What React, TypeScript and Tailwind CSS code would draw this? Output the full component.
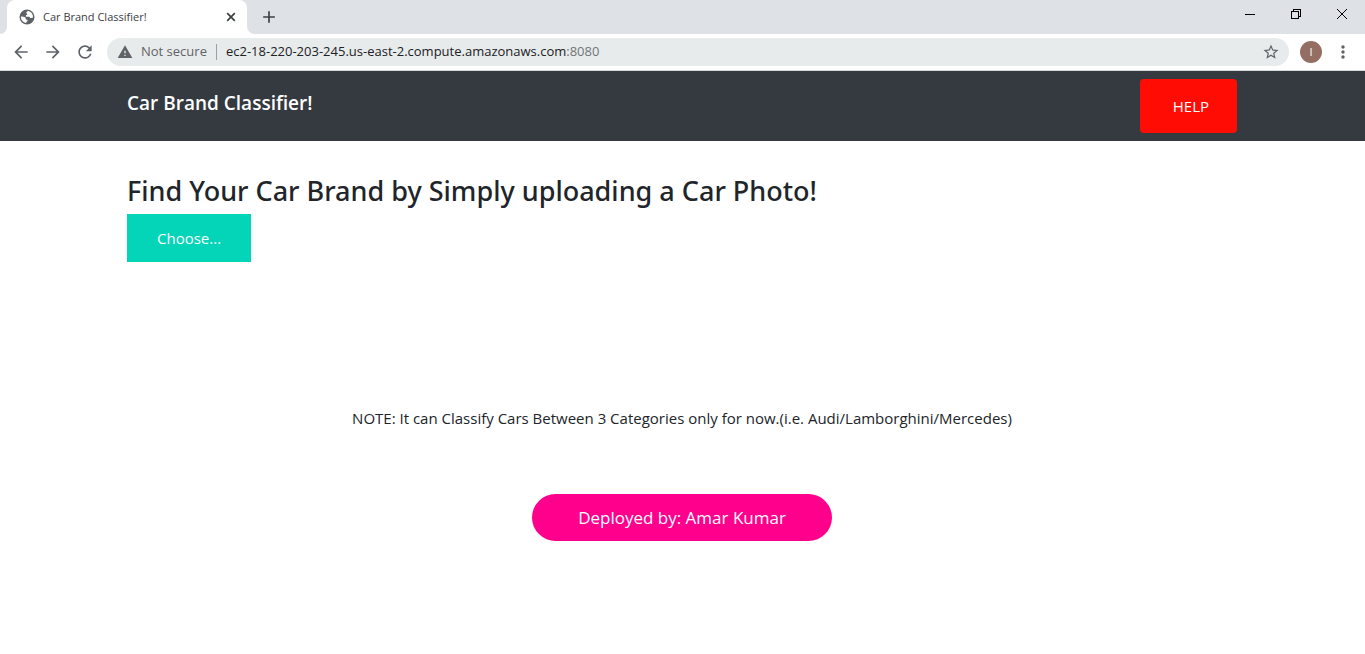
import React from "react";
import {
  MdAdd,
  MdArrowBack,
  MdArrowForward,
  MdMoreVert,
  MdRefresh,
  MdStarBorder,
  MdWarning,
} from "react-icons/md";

function GlobeIcon() {
  return (
    <svg className="size-4" viewBox="0 0 16 16" aria-hidden="true">
      <circle cx="8" cy="8" r="7.500" fill="#5f6368" />
      <path
        d="M9.200 1.900C8.200 2.300 7.300 3 7.400 4c.1.700 1 .6.900 1.400-.1.800-1.400.5-1.500 1.300-.1.600.3 1 1 1h2.300c.9 0 .8 1.300 1.600 1.400.8.100 1.300-.5 2.300-.6A6.200 6.200 0 0 0 9.200 1.900z"
        fill="#fff"
      />
      <path
        d="M1.900 7.400c1.300.1 3.300 0 4.200.9.800.8.300 1.700 1.200 2.100.7.300 1.300.2 1.300 1 0 .9-1.200.9-1.500 2.600A6.200 6.200 0 0 1 1.900 7.400z"
        fill="#fff"
      />
    </svg>
  );
}

function TabStrip() {
  return (
    <div className="flex h-[34px] items-start bg-[#dee1e6]">
      <div className="flex h-full items-end">
        <svg className="h-2 w-[7px] shrink-0" viewBox="0 0 7 8" aria-hidden="true">
          <path d="M7 0v8H0c4 0 7-3 7-8z" fill="#fff" />
        </svg>
        <div className="flex h-full w-60 items-center gap-2 rounded-t-lg bg-white pr-2 pl-3 text-[#3c4043]">
          <GlobeIcon />
          <span className="flex-1 truncate text-[11px]">Car Brand Classifier!</span>
          <button type="button" aria-label="Close tab" className="grid size-4 place-items-center">
            <svg className="size-4" viewBox="0 0 16 16" fill="none" stroke="#3c4043" strokeWidth="1.700" aria-hidden="true">
              <path d="M4.200 4.200l7.600 7.600M11.800 4.200l-7.600 7.600" />
            </svg>
          </button>
        </div>
        <svg className="h-2 w-2 shrink-0" viewBox="0 0 8 8" aria-hidden="true">
          <path d="M0 0v8h8C3.500 8 0 4.500 0 0z" fill="#fff" />
        </svg>
      </div>
      <button type="button" aria-label="New tab" className="ml-1 grid h-full w-5 place-items-center text-[#3c4043]">
        <MdAdd className="size-5" />
      </button>
      <div className="ml-auto flex h-7">
        <button type="button" aria-label="Minimize" className="grid w-[46px] place-items-center">
          <svg className="size-3" viewBox="0 0 12 12" stroke="#000" shapeRendering="crispEdges">
            <path d="M1 6.500h10" />
          </svg>
        </button>
        <button type="button" aria-label="Restore" className="grid w-[46px] place-items-center">
          <svg className="size-3" viewBox="0 0 12 12" fill="none" stroke="#000" shapeRendering="crispEdges">
            <path d="M1.500 3.500h7v7h-7zM3.500 3V1.500h7v7H9" />
          </svg>
        </button>
        <button type="button" aria-label="Close window" className="grid w-[46px] place-items-center">
          <svg className="size-3" viewBox="0 0 12 12" stroke="#000" strokeWidth="1">
            <path d="M1 1l10 10M11 1L1 11" />
          </svg>
        </button>
      </div>
    </div>
  );
}

function Toolbar() {
  return (
    <div className="flex h-[37px] items-center border-b border-[#d5dbdb] bg-white pr-3 pl-[11px] text-[#5f6368]">
      <div className="flex gap-3">
        <button type="button" aria-label="Back">
          <MdArrowBack className="size-5" />
        </button>
        <button type="button" aria-label="Forward">
          <MdArrowForward className="size-5" />
        </button>
        <button type="button" aria-label="Reload">
          <MdRefresh className="size-5" />
        </button>
      </div>
      <div className="ml-3 flex h-7 flex-1 items-center rounded-full bg-[#e8ebeb] pr-[9px] pl-2.5 text-[13px]">
        <MdWarning className="size-4" aria-hidden="true" />
        <span className="ml-2">Not secure</span>
        <span className="mx-[9px] h-4 w-px bg-[#9aa0a6]" />
        <span className="flex-1 text-[#202124]">
          ec2-18-220-203-245.us-east-2.compute.amazonaws.com<span className="text-[#70757a]">:8080</span>
        </span>
        <button type="button" aria-label="Bookmark this page">
          <MdStarBorder className="size-[18px]" />
        </button>
      </div>
      <button
        type="button"
        aria-label="Profile"
        className="ml-[11px] grid size-[22px] place-items-center rounded-full bg-[#956e63] text-[11px] text-white"
      >
        I
      </button>
      <button type="button" aria-label="Menu" className="ml-[11px]">
        <MdMoreVert className="size-5" />
      </button>
    </div>
  );
}

export default function App() {
  return (
    <div className="min-h-screen bg-white font-['Open_Sans','Noto_Sans',sans-serif] text-[#212529]">
      <TabStrip />
      <Toolbar />
      <nav className="bg-[#343a40]">
        <div className="mx-auto flex max-w-[1141px] items-start justify-between pt-2 pr-4 pb-2 pl-[15px]">
          <a href="#" className="pt-2 text-[19px] leading-8 font-semibold text-white">
            Car Brand Classifier!
          </a>
          <button type="button" className="h-[54px] rounded bg-[#ff0d05] pr-7 pl-[33px] text-[15px] text-white">
            HELP
          </button>
        </div>
      </nav>
      <main className="mx-auto max-w-[1141px] pt-8 pr-4 pl-[15px]">
        <h2 className="font-['Noto_Sans','Open_Sans',sans-serif] text-[27px] leading-9 font-medium">
          Find Your Car Brand by Simply uploading a Car Photo!
        </h2>
        <form className="mt-[5px]">
          <label
            htmlFor="imageUpload"
            className="inline-block cursor-pointer bg-[#04d5b9] px-[30px] py-3 text-[15px] leading-6 text-white"
          >
            Choose...
          </label>
          <input id="imageUpload" type="file" accept=".png,.jpg,.jpeg" className="sr-only" />
        </form>
        <p className="mt-36 text-center text-[15px] leading-6">
          NOTE: It can Classify Cars Between 3 Categories only for now.(i.e. Audi/Lamborghini/Mercedes)
        </p>
        <div className="mt-16 flex justify-center">
          <button type="button" className="h-[47px] w-[300px] rounded-full bg-[#ff008c] text-[17px] text-white">
            Deployed by: Amar Kumar
          </button>
        </div>
      </main>
    </div>
  );
}
